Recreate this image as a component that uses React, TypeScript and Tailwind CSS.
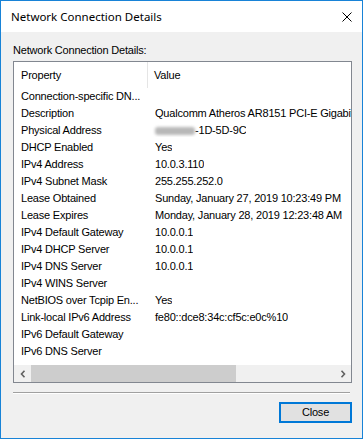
const rows: [string, string][] = [
  ["Connection-specific DN...", ""],
  ["Description", "Qualcomm Atheros AR8151 PCI-E Gigabit"],
  ["Physical Address", "MAC"],
  ["DHCP Enabled", "Yes"],
  ["IPv4 Address", "10.0.3.110"],
  ["IPv4 Subnet Mask", "255.255.252.0"],
  ["Lease Obtained", "Sunday, January 27, 2019 10:23:49 PM"],
  ["Lease Expires", "Monday, January 28, 2019 12:23:48 AM"],
  ["IPv4 Default Gateway", "10.0.0.1"],
  ["IPv4 DHCP Server", "10.0.0.1"],
  ["IPv4 DNS Server", "10.0.0.1"],
  ["IPv4 WINS Server", ""],
  ["NetBIOS over Tcpip En...", "Yes"],
  ["Link-local IPv6 Address", "fe80::dce8:34c:cf5c:e0c%10"],
  ["IPv6 Default Gateway", ""],
  ["IPv6 DNS Server", ""],
]

function Chevron({ dir }: { dir: "left" | "right" }) {
  return (
    <svg width="6" height="8" viewBox="0 0 6 8">
      <path
        d={dir === "left" ? "M4.5 0.8 L1.5 4 L4.5 7.2" : "M1.5 0.8 L4.5 4 L1.5 7.2"}
        fill="none"
        stroke="#606060"
        strokeWidth="1.6"
      />
    </svg>
  )
}

export default function App() {
  return (
    <div
      className="w-[364px] h-[446px] bg-white text-black"
      style={{ fontFamily: "'Liberation Sans', Arial, sans-serif" }}
    >
      <div className="w-[363px] h-[439px] border border-[#1883d7] flex flex-col">
        {/* title bar */}
        <div className="h-[31px] bg-white flex items-center justify-between pl-[10px] pr-[10px]">
          <span className="text-[11.5px] leading-none" style={{ fontFamily: "'Noto Sans', sans-serif" }}>
            Network Connection Details
          </span>
          <svg width="10" height="10" viewBox="0 0 10 10">
            <path d="M0.5 0.5 L9.5 9.5 M9.5 0.5 L0.5 9.5" stroke="#000" strokeWidth="1" />
          </svg>
        </div>

        {/* body */}
        <div className="flex-1 bg-[#f0f0f0] pl-[12px] pt-[12px] text-[11px] leading-[13px] tracking-[-0.2px]">
          <div>Network Connection Details:</div>

          <div className="mt-[4px] w-[339px] h-[322px] border border-[#828790] bg-white flex flex-col">
            <div className="h-[26px] flex items-center shrink-0">
              <div className="w-[134px] h-full flex items-center pl-[7px] border-r border-[#e5e5e5]">Property</div>
              <div className="pl-[6px]">Value</div>
            </div>
            <div className="flex-1 overflow-hidden">
              {rows.map(([k, v]) => (
                <div key={k} className="h-[17px] flex items-center whitespace-nowrap">
                  <div className="w-[135px] shrink-0 pl-[7px]">{k}</div>
                  <div className="pl-[6px] overflow-hidden flex items-center">
                    {v === "MAC" ? (
                      <>
                        <span className="inline-block w-[40px] h-[8px] bg-[#b8b8b8] rounded-[3px] blur-[1.5px]" />
                        <span>-1D-5D-9C</span>
                      </>
                    ) : (
                      v
                    )}
                  </div>
                </div>
              ))}
            </div>
            {/* horizontal scrollbar */}
            <div className="h-[17px] bg-[#f0f0f0] flex shrink-0">
              <div className="w-[17px] flex items-center justify-center">
                <Chevron dir="left" />
              </div>
              <div className="w-[205px] bg-[#cdcdcd]" />
              <div className="flex-1" />
              <div className="w-[17px] flex items-center justify-center">
                <Chevron dir="right" />
              </div>
            </div>
          </div>

          <div className="mt-[9px] w-[337px] border-t border-[#a0a0a0] border-b border-b-white" />

          <div className="mt-[8px] w-[339px] flex justify-end">
            <button className="w-[73px] h-[21px] border-2 border-[#0078d7] bg-[#e1e1e1] text-[11px] leading-none">
              Close
            </button>
          </div>
        </div>
      </div>
    </div>
  )
}
